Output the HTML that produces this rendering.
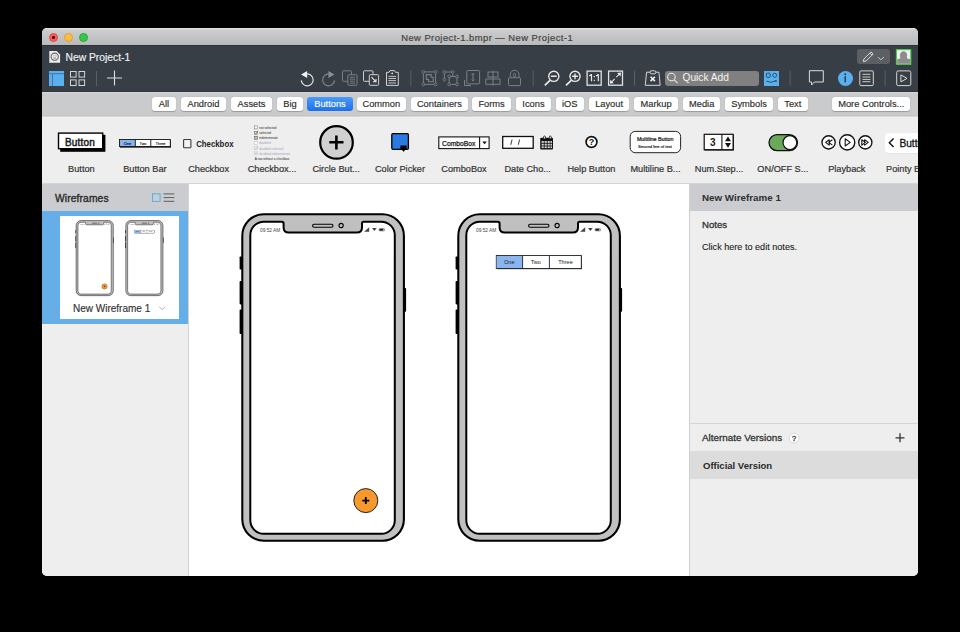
<!DOCTYPE html>
<html><head><meta charset="utf-8">
<style>
*{box-sizing:border-box}
html,body{margin:0;padding:0}
body{width:960px;height:632px;overflow:hidden;background:#000;position:relative;font-family:"Liberation Sans",sans-serif;color:#333}
#win{position:absolute;left:0;top:0;width:960px;height:632px;clip-path:inset(28px 42px 56px 42px round 5px);background:#eeeeee}
.a{position:absolute}
.t{position:absolute;white-space:nowrap;line-height:1}
#title{left:42px;top:28px;width:876px;height:17px;background:linear-gradient(#dedfe0 0,#dedfe0 1px,#cbcccd 2px,#b9babb 100%)}
#tb{left:42px;top:45px;width:876px;height:47px;background:#383e45;border-top:1px solid #2d3136;border-bottom:1px solid #30353a}
#fbar{left:42px;top:92px;width:876px;height:24px;background:#cacbcd;border-top:1px solid #d6d7d9;border-bottom:1px solid #c2c3c5}
#lib{left:42px;top:116px;width:876px;height:68px;background:#eeeeee;border-top:1px solid #d9d9d9;border-bottom:1px solid #d6d6d6}
.fb{position:absolute;top:97px;height:14px;background:#fff;border-radius:3px;box-shadow:0 0.5px 1px rgba(0,0,0,0.25);font-size:9.3px;line-height:14px;text-align:center;color:#2b2b2b;-webkit-text-stroke:0.15px #2b2b2b}
.fb.sel{background:linear-gradient(#4b9bf7,#1f6fee);color:#fff;box-shadow:none;-webkit-text-stroke:0.15px #fff}
.lbl{position:absolute;top:163.1px;width:64px;text-align:center;font-size:9.2px;line-height:12px;color:#333;white-space:nowrap;-webkit-text-stroke:0.2px #333}
.sep{position:absolute;width:1px;top:71px;height:15px;background:#5c6168}
</style></head><body>
<div id="win">
  <div id="title" class="a"></div>
  <div class="t" style="left:401.2px;top:32.7px;font-size:9.4px;letter-spacing:0.46px;color:#444;-webkit-text-stroke:0.2px #444">New Project-1.bmpr — New Project-1</div>
  <!-- traffic lights -->
  <div class="a" style="left:48.5px;top:32.5px;width:9.5px;height:9.5px;border-radius:50%;background:#fc605b;border:0.5px solid #de4a44"></div>
  <div class="a" style="left:52px;top:36px;width:2.6px;height:2.6px;border-radius:50%;background:#4d0000"></div>
  <div class="a" style="left:63.7px;top:32.5px;width:9.5px;height:9.5px;border-radius:50%;background:#fdbc40;border:0.5px solid #dea034"></div>
  <div class="a" style="left:78.7px;top:32.5px;width:9.5px;height:9.5px;border-radius:50%;background:#34c84a;border:0.5px solid #27aa35"></div>

  <div id="tb" class="a"></div>
  <div id="fbar" class="a"></div>
  <div id="lib" class="a"></div>

  <!-- left panel -->
  <div class="a" style="left:42px;top:184px;width:147px;height:392px;background:#eeeeee;border-right:1px solid #d4d4d4"></div>
  <div class="a" style="left:42px;top:184px;width:146px;height:27px;background:#cbcccf"></div>
  <div class="a" style="left:42px;top:211px;width:146px;height:113px;background:#66aee8"></div>
  <div class="a" style="left:59.8px;top:215.8px;width:119.5px;height:103.3px;background:#fff"></div>

<div class="fb" style="left:152.0px;width:24.0px">All</div>
<div class="fb" style="left:181.0px;width:45.0px">Android</div>
<div class="fb" style="left:231.0px;width:41.0px">Assets</div>
<div class="fb" style="left:277.0px;width:26.0px">Big</div>
<div class="fb sel" style="left:307.3px;width:45.4px">Buttons</div>
<div class="fb" style="left:356.8px;width:49.1px">Common</div>
<div class="fb" style="left:411.1px;width:56.6px">Containers</div>
<div class="fb" style="left:472.3px;width:38.5px">Forms</div>
<div class="fb" style="left:515.7px;width:35.5px">Icons</div>
<div class="fb" style="left:555.8px;width:28.0px">iOS</div>
<div class="fb" style="left:589.0px;width:40.2px">Layout</div>
<div class="fb" style="left:634.2px;width:43.8px">Markup</div>
<div class="fb" style="left:683.0px;width:37.4px">Media</div>
<div class="fb" style="left:725.2px;width:47.7px">Symbols</div>
<div class="fb" style="left:777.9px;width:29.8px">Text</div>
<div class="fb" style="left:832.2px;width:78.2px">More Controls...</div>
<div class="lbl" style="left:49.4px">Button</div>
<div class="lbl" style="left:112.9px">Button Bar</div>
<div class="lbl" style="left:176.6px">Checkbox</div>
<div class="lbl" style="left:240.0px">Checkbox...</div>
<div class="lbl" style="left:304.2px">Circle But...</div>
<div class="lbl" style="left:368.0px">Color Picker</div>
<div class="lbl" style="left:432.0px">ComboBox</div>
<div class="lbl" style="left:495.7px">Date Cho...</div>
<div class="lbl" style="left:559.4px">Help Button</div>
<div class="lbl" style="left:623.5px">Multiline B...</div>
<div class="lbl" style="left:687.1px">Num.Step...</div>
<div class="lbl" style="left:750.9px">ON/OFF S...</div>
<div class="lbl" style="left:814.8px">Playback</div>
<div class="lbl" style="left:886px;text-align:left;width:80px">Pointy B...</div>

  <!-- toolbar text -->
  <div class="t" style="left:65.5px;top:53.2px;font-size:10.3px;color:#f2f2f2;-webkit-text-stroke:0.15px #f2f2f2">New Project-1</div>
  <div class="a" style="left:665px;top:70.7px;width:94.2px;height:15px;background:#808080;border-radius:3px"></div>
  <div class="t" style="left:682.5px;top:73px;font-size:10.2px;color:#f4f4f4">Quick Add</div>
  <div class="a" style="left:856.8px;top:49.2px;width:33px;height:15.2px;background:#5c6065;border-radius:3px"></div>
  <div class="a" style="left:763.7px;top:70.7px;width:15.5px;height:15px;background:#5aafef"></div>
  <div class="a" style="left:845.1px;top:78.2px;width:15px;height:15px;margin:-7.5px 0 0 -7.5px;border-radius:50%;background:#5aafef"></div>
  <!-- left panel text -->
  <div class="t" style="left:55px;top:194px;font-size:10.3px;letter-spacing:0.1px;color:#2a2a2a;-webkit-text-stroke:0.35px #2a2a2a">Wireframes</div>
  <div class="t" style="left:73px;top:303.6px;font-size:10px;color:#333;-webkit-text-stroke:0.15px #333">New Wireframe 1</div>

  <!-- canvas -->
  <div class="a" style="left:189px;top:184px;width:500px;height:392px;background:#fff"></div>

  <!-- right panel -->
  <div class="a" style="left:689px;top:184px;width:229px;height:392px;background:#eeeeee;border-left:1px solid #cfcfcf"></div>
  <div class="a" style="left:690px;top:184px;width:228px;height:26.5px;background:#cbcccf"></div>
  <div class="a" style="left:690px;top:423px;width:228px;height:1px;background:#d6d6d6"></div>
  <div class="a" style="left:690px;top:450.5px;width:228px;height:28px;background:#dcdcdc"></div>

  <!-- right panel text -->
  <div class="t" style="left:702px;top:192.5px;font-size:9.8px;font-weight:bold;color:#2e2e2e">New Wireframe 1</div>
  <div class="t" style="left:702px;top:219.8px;font-size:9.6px;color:#333;-webkit-text-stroke:0.3px #333">Notes</div>
  <div class="t" style="left:702px;top:242.5px;font-size:9.1px;color:#222;-webkit-text-stroke:0.1px #222">Click here to edit notes.</div>
  <div class="t" style="left:702px;top:433px;font-size:9.9px;color:#333;-webkit-text-stroke:0.3px #333">Alternate Versions</div>
  <div class="t" style="left:703px;top:460.5px;font-size:9.5px;font-weight:bold;color:#2a2a2a">Official Version</div>

<svg class="a" style="left:0;top:0" width="960" height="632" viewBox="0 0 960 632">
<g fill="none" stroke-linecap="butt">
  <!-- project icon -->
  <path d="M49.3 51 H56.6 L60.1 54.4 V62.8 H49.3 Z" fill="#ececec"/>
  <circle cx="54.7" cy="56.7" r="3.6" stroke="#6a6a6a" stroke-width="1.1"/>
  <path d="M53.3 58 H56.1" stroke="#777" stroke-width="0.9"/>
  <circle cx="53.6" cy="55.7" r="0.5" fill="#888"/><circle cx="55.8" cy="55.7" r="0.5" fill="#888"/>
  <!-- layout icon -->
  <rect x="49" y="71" width="15" height="15" fill="#5aafef"/>
  <rect x="49" y="73.3" width="15" height="0.9" fill="#3b6f9a"/>
  <rect x="52" y="74.2" width="0.9" height="11.8" fill="#3b6f9a"/>
  <!-- grid icon -->
  <g stroke="#d6d6d6" stroke-width="1">
    <rect x="70.5" y="71.5" width="5.6" height="5.6"/>
    <rect x="79" y="71.5" width="5.6" height="5.6"/>
    <rect x="70.5" y="79.9" width="5.6" height="5.6"/>
    <rect x="79" y="79.9" width="5.6" height="5.6"/>
  </g>
  <!-- plus -->
  <path d="M107 78 H122 M114.5 70.5 V85.5" stroke="#dedede" stroke-width="1.1"/>
  <!-- undo -->
  <path d="M307.2 73.9 A5.95 5.95 0 1 1 301.3 80.4" stroke="#e2e2e2" stroke-width="1.2"/>
  <path d="M301.1 74.5 L307.2 70.9 L307.2 78 Z" fill="#f2f2f2"/>
  <!-- redo -->
  <path d="M328.6 73.9 A5.95 5.95 0 1 0 334.5 80.4" stroke="#80858b" stroke-width="1.2"/>
  <path d="M334.5 74.5 L328.4 70.9 L328.4 78 Z" fill="#8a8f94"/>
  <!-- copy (disabled) -->
  <g stroke="#7a7f85" stroke-width="1">
    <rect x="342.5" y="70.8" width="9" height="10.5" rx="0.8"/>
    <rect x="347.8" y="74.7" width="9.2" height="10.6" rx="0.8" fill="#393e45"/>
    <path d="M349.8 77.2 H355 M349.8 79.2 H355 M349.8 81.2 H355 M349.8 83.2 H355" stroke-width="0.9"/>
  </g>
  <!-- duplicate -->
  <g stroke="#cfcfcf" stroke-width="1">
    <rect x="363.5" y="70.8" width="9.5" height="10.5" rx="0.8"/>
    <rect x="369.3" y="74.7" width="9.3" height="10.6" rx="0.8" fill="#393e45"/>
    <path d="M371.5 77.2 L376 81.8 M376 79 V81.8 H373" stroke="#e8e8e8" stroke-width="1.1"/>
  </g>
  <!-- paste -->
  <g stroke="#d2d2d2" stroke-width="1">
    <path d="M389 72.3 H386.5 V85.4 H398.3 V72.3 H395.5 L394.5 70.6 H390 Z"/>
    <path d="M388.4 76.4 H396 M388.4 78.5 H396 M388.4 80.6 H396 M388.4 83 H396" stroke-width="0.9"/>
  </g>
  <circle cx="392.2" cy="73.3" r="0.9" fill="#e0e0e0"/>
  <!-- separators -->
  <g fill="#5a5f66">
    <rect x="96" y="71" width="1" height="15"/>
    <rect x="410.3" y="70.7" width="1" height="15"/>
    <rect x="532.7" y="70.7" width="1" height="15"/>
    <rect x="634" y="70.7" width="1" height="15"/>
    <rect x="789.6" y="70.7" width="1" height="15"/>
    <rect x="884.6" y="70.7" width="1" height="15"/>
  </g>
  <!-- group -->
  <g stroke="#7b8086" stroke-width="1">
    <rect x="423.4" y="71.9" width="12.2" height="12.5"/>
    <path d="M426.3 74.6 H431.2 V77.2 H433.2 V81.8 H428.5 V79.4 H426.3 Z" stroke-width="1.1"/>
  </g>
  <g fill="#393e45" stroke="#7b8086" stroke-width="0.9">
    <circle cx="423.4" cy="71.9" r="1.4"/><circle cx="435.6" cy="71.9" r="1.4"/>
    <circle cx="423.4" cy="84.4" r="1.4"/><circle cx="435.6" cy="84.4" r="1.4"/>
  </g>
  <!-- ungroup -->
  <g stroke="#7b8086" stroke-width="1">
    <path d="M444.4 79.6 V72 H452.7 V76.5"/>
    <rect x="449.2" y="76.5" width="7.8" height="7.9"/>
  </g>
  <g fill="#393e45" stroke="#7b8086" stroke-width="0.9">
    <circle cx="444.4" cy="72" r="1.4"/><circle cx="452.7" cy="72" r="1.4"/><circle cx="444.4" cy="79.6" r="1.4"/>
    <circle cx="449.2" cy="76.5" r="1.4"/><circle cx="457" cy="76.5" r="1.4"/>
    <circle cx="449.2" cy="84.4" r="1.4"/><circle cx="457" cy="84.4" r="1.4"/>
  </g>
  <!-- arrange -->
  <g stroke="#7b8086" stroke-width="1">
    <rect x="466.8" y="70.5" width="12.8" height="13.4" rx="1"/>
    <path d="M464.5 80 V85.5 H471"/>
    <path d="M473 73.6 V80.8 M471.6 74.9 L473 73.4 L474.4 74.9 M471.6 79.5 L473 81 L474.4 79.5"/>
  </g>
  <!-- align -->
  <g stroke="#7b8086" stroke-width="1">
    <path d="M493 70.7 V85.7"/>
    <rect x="488" y="72" width="10" height="5"/>
    <rect x="485.8" y="79" width="14.2" height="5.3"/>
  </g>
  <!-- lock -->
  <g stroke="#7b8086" stroke-width="1">
    <rect x="508.5" y="77.7" width="12" height="7.9" rx="1"/>
    <path d="M510.3 77.7 V74.6 A4.35 4.35 0 0 1 519 74.6 V77.7"/>
    <rect x="513.6" y="73.3" width="1.9" height="3.6" rx="0.95" stroke-width="0.9"/>
  </g>
  <!-- zoom out -->
  <g stroke="#e8e8e8">
    <circle cx="553.8" cy="76.3" r="5.1" stroke-width="1.4"/>
    <path d="M550.9 76.3 H556.7" stroke-width="1.4"/>
    <path d="M550 80.3 L544.8 85.3" stroke-width="1.8"/>
    <circle cx="575" cy="76.3" r="5.1" stroke-width="1.4"/>
    <path d="M572.1 76.3 H577.9 M575 73.4 V79.2" stroke-width="1.4"/>
    <path d="M571.2 80.3 L566 85.3" stroke-width="1.8"/>
  </g>
  <!-- 1:1 -->
  <rect x="587.1" y="71.1" width="14.1" height="14.1" stroke="#e2e2e2" stroke-width="1.3"/>
  <path d="M589.3 76.1 L591.5 74.6 V81.2 M596.1 76.1 L598.3 74.6 V81.2" stroke="#ececec" stroke-width="1.15" stroke-linejoin="round"/><rect x="593.7" y="76" width="1.2" height="1.2" fill="#ececec"/><rect x="593.7" y="79.8" width="1.2" height="1.2" fill="#ececec"/>
  <!-- fit -->
  <rect x="608.6" y="71.1" width="13.9" height="14.1" stroke="#e2e2e2" stroke-width="1.3"/>
  <path d="M616.3 77.1 L619.6 73.8 M614.7 78.9 L611.3 82.3" stroke="#e8e8e8" stroke-width="1.1"/>
  <path d="M621 72.6 L620.6 76.4 L617.2 73 Z M609.9 83.6 L610.3 79.8 L613.7 83.2 Z" fill="#ececec"/>
  <!-- clear -->
  <g stroke="#d6d6d6" stroke-width="1">
    <path d="M650 72.2 H646.6 L645.2 85.3 H660.2 L658.9 72.2 H655.8"/>
    <rect x="650" y="70.8" width="5.8" height="3" rx="1.2"/>
  </g>
  <path d="M650.6 76.8 L654.9 81.1 M654.9 76.8 L650.6 81.1" stroke="#f4f4f4" stroke-width="1.6"/>
  <!-- search in quick add -->
  <circle cx="671.4" cy="77" r="3.8" stroke="#e8e8e8" stroke-width="1.1"/>
  <path d="M674.2 79.8 L677.6 83.2" stroke="#e8e8e8" stroke-width="1.1"/>
  <!-- blue icon features -->
  <g stroke="#2f4f6a" stroke-width="1">
    <rect x="766.4" y="73.2" width="3.8" height="4.2" rx="0.8"/>
    <circle cx="774.7" cy="75.3" r="2"/>
    <path d="M766.4 81.2 Q771 83.6 776 80.8"/>
  </g>
  <path d="M774.3 80.3 L776.8 80 L776.4 82.5 Z" fill="#2f4f6a"/>
  <!-- comment -->
  <path d="M809.4 70.7 H823.3 V82 H814.4 L811.6 85 V82 H809.4 Z" stroke="#dcdcdc" stroke-width="1"/>
  <!-- info i -->
  <circle cx="845.2" cy="74.3" r="0.95" fill="#30353b"/>
  <rect x="844.5" y="76.2" width="1.4" height="6.2" fill="#30353b"/>
  <!-- list -->
  <rect x="859.8" y="70.9" width="13.5" height="14.7" rx="1" stroke="#d6d6d6" stroke-width="1"/>
  <path d="M862.4 74.3 H870.4 M862.4 79.4 H870.4 M862.4 81.7 H870.4" stroke="#dcdcdc" stroke-width="0.9"/>
  <path d="M862.4 77 H870.4" stroke="#9a9a9a" stroke-width="1.4"/>
  <!-- play -->
  <rect x="896.7" y="70.9" width="14.1" height="14.7" rx="1.5" stroke="#d6d6d6" stroke-width="1"/>
  <path d="M900.9 74.9 L907 78.4 L900.9 81.9 Z" stroke="#dcdcdc" stroke-width="1"/>
  <!-- pencil -->
  <path d="M863.3 61.6 L863.9 59 L871 51.9 L873.1 54 L866 61.1 Z M869.8 53.1 L871.9 55.2" stroke="#e4e4e4" stroke-width="0.9"/>
  <path d="M877.9 57.1 L880.9 59.8 L884 57.1" stroke="#cfd2d5" stroke-width="0.9"/>
  <!-- avatar -->
  <rect x="896.4" y="49.6" width="14.4" height="14.7" fill="#f3f0f3" stroke="#3fd13f" stroke-width="1.1"/>
  <path d="M900.4 58.2 C899.6 55.5 899.6 51.6 903.6 51.2 C907.6 51.6 907.6 55.5 906.8 58.2 L910 59.3 V63.7 H897.2 V59.3 Z" fill="#8d8d8d"/>
</g>
</svg>

<svg class="a" style="left:0;top:0" width="960" height="632" viewBox="0 0 960 632" font-family="Liberation Sans">
  <!-- Button -->
  <rect x="60.2" y="134.8" width="45.2" height="17" fill="#000"/>
  <rect x="58.5" y="133.1" width="44.2" height="15.6" fill="#fff" stroke="#000" stroke-width="1.4"/>
  <text x="80" y="145.6" font-size="10" fill="#1a1a1a" stroke="#1a1a1a" stroke-width="0.45" text-anchor="middle" letter-spacing="0.2">Button</text>
  <!-- Button Bar -->
  <rect x="120" y="140" width="51" height="7.6" fill="#000"/>
  <rect x="119.5" y="139.5" width="50.8" height="7" fill="#fff" stroke="#111" stroke-width="0.9"/>
  <rect x="120" y="140" width="15.3" height="6" fill="#85b3ee"/>
  <path d="M135.3 139.5 V146.5 M150.8 139.5 V146.5" stroke="#111" stroke-width="0.9"/>
  <g font-size="3.8" fill="#111" stroke="#111" stroke-width="0.12" text-anchor="middle">
    <text x="127.6" y="144.5">One</text><text x="143" y="144.5">Two</text><text x="160.5" y="144.5">Three</text>
  </g>
  <!-- Checkbox -->
  <rect x="183.6" y="139.5" width="7.3" height="8.2" rx="0.8" fill="#f2f2f2" stroke="#3a3a3a" stroke-width="1.1"/>
  <text x="196.2" y="146.6" font-size="8.4" font-weight="bold" fill="#222" textLength="37.3" lengthAdjust="spacingAndGlyphs">Checkbox</text>
  <!-- Checkbox group -->
  <g font-size="3.8" lengthAdjust="spacingAndGlyphs">
    <rect x="254.6" y="125.9" width="3" height="3" fill="#fff" stroke="#666" stroke-width="0.5"/>
    <text x="259.2" y="128.9" fill="#222" textLength="17" lengthAdjust="spacingAndGlyphs">not selected</text>
    <rect x="254.6" y="131.3" width="3" height="3" fill="#fff" stroke="#555" stroke-width="0.5"/><path d="M255.1 132.6 L256 133.8 L257.6 130.9" fill="none" stroke="#333" stroke-width="0.6"/>
    <text x="259.2" y="134.3" fill="#222" textLength="11.7" lengthAdjust="spacingAndGlyphs">selected</text>
    <rect x="254.6" y="136.3" width="3" height="3" fill="#bbb" stroke="#555" stroke-width="0.5"/>
    <text x="259.2" y="139.3" fill="#222" textLength="18.6" lengthAdjust="spacingAndGlyphs">indeterminate</text>
    <rect x="254.6" y="141.4" width="3" height="3" fill="#fff" stroke="#bbb" stroke-width="0.5"/>
    <text x="259.2" y="144.4" fill="#a4a6b8" textLength="11.4" lengthAdjust="spacingAndGlyphs">disabled</text>
    <rect x="254.6" y="146.5" width="3" height="3" fill="#fff" stroke="#bbb" stroke-width="0.5"/><path d="M255.1 147.8 L256 149 L257.6 146.1" fill="none" stroke="#aaa" stroke-width="0.6"/>
    <text x="259.2" y="149.5" fill="#a4a6b8" textLength="24" lengthAdjust="spacingAndGlyphs">disabled selected</text>
    <rect x="254.6" y="151.8" width="3" height="3" fill="#d8d8dd" stroke="#ccc" stroke-width="0.5"/>
    <text x="259.2" y="154.8" fill="#a4a6b8" textLength="31" lengthAdjust="spacingAndGlyphs">disabled indeterminate</text>
    <text x="254.7" y="159.9" fill="#222" textLength="34.5" lengthAdjust="spacingAndGlyphs">A row without a checkbox</text>
  </g>
  <!-- Circle button -->
  <circle cx="336.5" cy="142.4" r="16.3" fill="#d0d0d0" stroke="#000" stroke-width="2.2"/>
  <path d="M329.3 142.3 H343.5 M336.4 135.5 V149.4" stroke="#000" stroke-width="2.6"/>
  <!-- Color picker -->
  <rect x="391.8" y="133.6" width="16.6" height="15.7" rx="1.2" fill="#2b7ae0" stroke="#000" stroke-width="1.3"/>
  <path d="M400.4 145.4 H406.6 V148.2 L403.6 151.8 L400.4 148.2 Z" fill="#000"/>
  <!-- ComboBox -->
  <rect x="438.8" y="136.9" width="50.3" height="11.7" fill="#fff" stroke="#111" stroke-width="1.1"/>
  <path d="M479.6 136.9 V148.6" stroke="#111" stroke-width="1.1"/>
  <path d="M482.3 141.6 H486.8 L484.55 144.2 Z" fill="#111"/>
  <text x="442" y="145.6" font-size="7.4" fill="#111" stroke="#111" stroke-width="0.25" textLength="33.5" lengthAdjust="spacingAndGlyphs">ComboBox</text>
  <!-- Date -->
  <rect x="502.7" y="136.5" width="30.5" height="11.8" fill="#fff" stroke="#111" stroke-width="1.3"/>
  <path d="M512.1 139.5 L510.8 144.8 M519.6 139.5 L518.3 144.8" stroke="#222" stroke-width="0.9"/>
  <rect x="540.2" y="137.8" width="12.8" height="11.6" rx="1" fill="#111"/>
  <g fill="#cfcfcf">
    <rect x="541.6" y="141" width="2.2" height="1.9"/><rect x="544.6" y="141" width="2.2" height="1.9"/><rect x="547.6" y="141" width="2.2" height="1.9"/><rect x="550.4" y="141" width="1.6" height="1.9"/>
    <rect x="541.6" y="143.7" width="2.2" height="1.9"/><rect x="544.6" y="143.7" width="2.2" height="1.9"/><rect x="547.6" y="143.7" width="2.2" height="1.9"/><rect x="550.4" y="143.7" width="1.6" height="1.9"/>
    <rect x="541.6" y="146.4" width="2.2" height="1.7"/><rect x="544.6" y="146.4" width="2.2" height="1.7"/><rect x="547.6" y="146.4" width="2.2" height="1.7"/><rect x="550.4" y="146.4" width="1.6" height="1.7"/>
  </g>
  <g fill="#fff" stroke="#111" stroke-width="0.8"><rect x="543.6" y="136" width="1.8" height="3" rx="0.9"/><rect x="549.4" y="136" width="1.8" height="3" rx="0.9"/></g>
  <!-- Help -->
  <circle cx="591.5" cy="142" r="5.4" fill="#fff" stroke="#111" stroke-width="1.7"/>
  <text x="591.6" y="145.4" font-size="9" font-weight="bold" fill="#111" text-anchor="middle">?</text>
  <!-- Multiline -->
  <rect x="630.2" y="131.4" width="50.4" height="21.3" rx="5" fill="#fff" stroke="#222" stroke-width="1"/>
  <text x="636.9" y="140.7" font-size="5.4" fill="#111" stroke="#111" stroke-width="0.2" textLength="36.6" lengthAdjust="spacingAndGlyphs">Multiline Button</text>
  <text x="638" y="147.9" font-size="4.2" fill="#111" stroke="#111" stroke-width="0.15" textLength="34" lengthAdjust="spacingAndGlyphs">Second line of text</text>
  <!-- Stepper -->
  <rect x="704.5" y="134.6" width="29.4" height="15.9" fill="#000"/>
  <rect x="704.2" y="134.3" width="28.9" height="15.4" fill="#fff" stroke="#111" stroke-width="1.2"/>
  <path d="M721.9 134.3 V149.7" stroke="#111" stroke-width="1.1"/>
  <text x="712.9" y="146.3" font-size="10" font-weight="bold" fill="#1a1a1a" text-anchor="middle">3</text>
  <path d="M725 141.3 L728 136.6 L731 141.3 Z M725 143 L728 147.7 L731 143 Z" fill="#111"/>
  <!-- Toggle -->
  <rect x="769" y="134.6" width="28.5" height="16" rx="8" fill="#6aa95a" stroke="#111" stroke-width="1.3"/>
  <circle cx="789.9" cy="142.6" r="6.9" fill="#fff" stroke="#111" stroke-width="1.2"/>
  <!-- Playback -->
  <g fill="#fff" stroke="#111" stroke-width="1.35">
    <circle cx="828.6" cy="142.4" r="6.6"/>
    <circle cx="847.2" cy="142.4" r="7.6"/>
    <circle cx="865.3" cy="142.4" r="6.6"/>
  </g>
  <g fill="none" stroke="#111" stroke-width="1.1" stroke-linejoin="round">
    <path d="M829.2 139.7 L825.6 142.4 L829.2 145.1 Z M832.4 139.7 L828.8 142.4 L832.4 145.1"/>
    <path d="M845.2 138.8 L850.2 142.4 L845.2 146 Z"/>
    <path d="M861.8 139.7 L865.4 142.4 L861.8 145.1 Z M864.6 139.7 L868.2 142.4 L864.6 145.1 Z"/>
  </g>
  <!-- Pointy -->
  <rect x="885.3" y="133.6" width="45" height="20" rx="4" fill="#000" opacity="0.08"/><rect x="885" y="133" width="45" height="20" rx="4" fill="#fff"/>
  <path d="M893.6 138.6 L889.3 142.8 L893.6 147" fill="none" stroke="#111" stroke-width="1.4"/>
  <text x="899.4" y="146.8" font-size="10.2" fill="#111" stroke="#111" stroke-width="0.3">Button</text>
</svg>

<svg class="a" style="left:0;top:0" width="960" height="632" viewBox="0 0 960 632" font-family="Liberation Sans">
  <g>
  <rect x="239.6" y="256.5" width="3" height="13.1" rx="0.8" fill="#000"/>
  <rect x="239.6" y="281" width="3" height="23.4" rx="0.8" fill="#000"/>
  <rect x="239.6" y="309.6" width="3" height="24.4" rx="0.8" fill="#000"/>
  <rect x="403.5" y="288" width="2.6" height="23.8" rx="0.8" fill="#000"/>
  <rect x="242.3" y="214.3" width="161.6" height="326.4" rx="21.5" fill="#c0c0c0" stroke="#000" stroke-width="2.1"/>
  <path d="M263.8 221.7 H281.8 Q283.6 221.7 283.6 223.5 V227.6 Q283.6 232.6 288.6 232.6 H357 Q362 232.6 362 227.6 V223.5 Q362 221.7 363.8 221.7 H381.3 A13.5 13.5 0 0 1 394.8 235.2 V520.3 A13.5 13.5 0 0 1 381.3 533.8 H263.8 A13.5 13.5 0 0 1 250.3 520.3 V235.2 A13.5 13.5 0 0 1 263.8 221.7 Z" fill="#fff" stroke="#000" stroke-width="2"/>
  <rect x="312.6" y="224.3" width="20.4" height="3" rx="1.5" fill="#c0c0c0" stroke="#000" stroke-width="1.1"/>
  <circle cx="341.1" cy="225.5" r="2.1" fill="#c8c8c8" stroke="#000" stroke-width="1.1"/>
  <text x="260" y="232" font-size="4.8" fill="#444" letter-spacing="0">09:52 AM</text>
  <path d="M364.1 231.7 L369.2 231.7 L369.2 227.3 Z" fill="#444"/>
  <path d="M372 228.1 L376.7 228.1 L374.4 231 Z" fill="#444"/>
  <rect x="379.2" y="228.6" width="5.3" height="2.3" rx="0.5" fill="#fff" stroke="#444" stroke-width="0.5"/>
  <rect x="379.4" y="228.8" width="3.9" height="1.9" fill="#222"/>
  <circle cx="365.8" cy="500.6" r="12" fill="#f7992c" stroke="#222" stroke-width="1"/>
  <path d="M362.3 500.6 H369.3 M365.8 497.1 V504.1" stroke="#000" stroke-width="1.8"/>
  </g>
  <g>
  <rect x="455.6" y="256.5" width="3" height="13.1" rx="0.8" fill="#000"/>
  <rect x="455.6" y="281" width="3" height="23.4" rx="0.8" fill="#000"/>
  <rect x="455.6" y="309.6" width="3" height="24.4" rx="0.8" fill="#000"/>
  <rect x="619.5" y="288" width="2.6" height="23.8" rx="0.8" fill="#000"/>
  <rect x="458.3" y="214.3" width="161.6" height="326.4" rx="21.5" fill="#c0c0c0" stroke="#000" stroke-width="2.1"/>
  <path d="M479.8 221.7 H497.8 Q499.6 221.7 499.6 223.5 V227.6 Q499.6 232.6 504.6 232.6 H573 Q578 232.6 578 227.6 V223.5 Q578 221.7 579.8 221.7 H597.3 A13.5 13.5 0 0 1 610.8 235.2 V520.3 A13.5 13.5 0 0 1 597.3 533.8 H479.8 A13.5 13.5 0 0 1 466.3 520.3 V235.2 A13.5 13.5 0 0 1 479.8 221.7 Z" fill="#fff" stroke="#000" stroke-width="2"/>
  <rect x="528.6" y="224.3" width="20.4" height="3" rx="1.5" fill="#c0c0c0" stroke="#000" stroke-width="1.1"/>
  <circle cx="557.1" cy="225.5" r="2.1" fill="#c8c8c8" stroke="#000" stroke-width="1.1"/>
  <text x="476" y="232" font-size="4.8" fill="#444" letter-spacing="0">09:52 AM</text>
  <path d="M580.1 231.7 L585.2 231.7 L585.2 227.3 Z" fill="#444"/>
  <path d="M588 228.1 L592.7 228.1 L590.4 231 Z" fill="#444"/>
  <rect x="595.2" y="228.6" width="5.3" height="2.3" rx="0.5" fill="#fff" stroke="#444" stroke-width="0.5"/>
  <rect x="595.4" y="228.8" width="3.9" height="1.9" fill="#222"/>
  <rect x="497" y="256.2" width="85" height="13" fill="#444"/>
  <rect x="496.3" y="255.5" width="85" height="13" fill="#fff" stroke="#222" stroke-width="0.9"/>
  <rect x="496.8" y="256" width="25.8" height="12" fill="#8ab5ee"/>
  <path d="M522.6 255.5 V268.5 M549.4 255.5 V268.5" stroke="#222" stroke-width="0.9"/>
  <g font-size="5.6" fill="#222" text-anchor="middle"><text x="509.3" y="264.2">One</text><text x="535.8" y="264.2">Two</text><text x="565.5" y="264.2">Three</text></g>
  </g>
</svg>

<svg class="a" style="left:0;top:0" width="960" height="632" viewBox="0 0 960 632" font-family="Liberation Sans">
  <rect x="152.5" y="193.8" width="7.6" height="7.6" fill="none" stroke="#5aaeea" stroke-width="1"/>
  <path d="M163.6 193.9 H174.3 M163.6 197.6 H174.3 M163.6 201.3 H174.3" stroke="#505050" stroke-width="0.9"/>
  <path d="M159.2 306.9 L162.1 309.6 L165 306.9" fill="none" stroke="#9aa0a8" stroke-width="0.8"/>
  <g transform="translate(20.4,171.3) scale(0.23)">
  <g>
  <rect x="239.6" y="256.5" width="3" height="13.1" rx="0.8" fill="#000"/>
  <rect x="239.6" y="281" width="3" height="23.4" rx="0.8" fill="#000"/>
  <rect x="239.6" y="309.6" width="3" height="24.4" rx="0.8" fill="#000"/>
  <rect x="403.5" y="288" width="2.6" height="23.8" rx="0.8" fill="#000"/>
  <rect x="242.3" y="214.3" width="161.6" height="326.4" rx="21.5" fill="#c0c0c0" stroke="#000" stroke-width="2.1"/>
  <path d="M263.8 221.7 H281.8 Q283.6 221.7 283.6 223.5 V227.6 Q283.6 232.6 288.6 232.6 H357 Q362 232.6 362 227.6 V223.5 Q362 221.7 363.8 221.7 H381.3 A13.5 13.5 0 0 1 394.8 235.2 V520.3 A13.5 13.5 0 0 1 381.3 533.8 H263.8 A13.5 13.5 0 0 1 250.3 520.3 V235.2 A13.5 13.5 0 0 1 263.8 221.7 Z" fill="#fff" stroke="#000" stroke-width="2"/>
  <rect x="312.6" y="224.3" width="20.4" height="3" rx="1.5" fill="#c0c0c0" stroke="#000" stroke-width="1.1"/>
  <circle cx="341.1" cy="225.5" r="2.1" fill="#c8c8c8" stroke="#000" stroke-width="1.1"/>
  <text x="260" y="232" font-size="4.8" fill="#444" letter-spacing="0">09:52 AM</text>
  <path d="M364.1 231.7 L369.2 231.7 L369.2 227.3 Z" fill="#444"/>
  <path d="M372 228.1 L376.7 228.1 L374.4 231 Z" fill="#444"/>
  <rect x="379.2" y="228.6" width="5.3" height="2.3" rx="0.5" fill="#fff" stroke="#444" stroke-width="0.5"/>
  <rect x="379.4" y="228.8" width="3.9" height="1.9" fill="#222"/>
  <circle cx="365.8" cy="500.6" r="12" fill="#f7992c" stroke="#222" stroke-width="1"/>
  <path d="M362.3 500.6 H369.3 M365.8 497.1 V504.1" stroke="#000" stroke-width="1.8"/>
  </g>
  <g>
  <rect x="455.6" y="256.5" width="3" height="13.1" rx="0.8" fill="#000"/>
  <rect x="455.6" y="281" width="3" height="23.4" rx="0.8" fill="#000"/>
  <rect x="455.6" y="309.6" width="3" height="24.4" rx="0.8" fill="#000"/>
  <rect x="619.5" y="288" width="2.6" height="23.8" rx="0.8" fill="#000"/>
  <rect x="458.3" y="214.3" width="161.6" height="326.4" rx="21.5" fill="#c0c0c0" stroke="#000" stroke-width="2.1"/>
  <path d="M479.8 221.7 H497.8 Q499.6 221.7 499.6 223.5 V227.6 Q499.6 232.6 504.6 232.6 H573 Q578 232.6 578 227.6 V223.5 Q578 221.7 579.8 221.7 H597.3 A13.5 13.5 0 0 1 610.8 235.2 V520.3 A13.5 13.5 0 0 1 597.3 533.8 H479.8 A13.5 13.5 0 0 1 466.3 520.3 V235.2 A13.5 13.5 0 0 1 479.8 221.7 Z" fill="#fff" stroke="#000" stroke-width="2"/>
  <rect x="528.6" y="224.3" width="20.4" height="3" rx="1.5" fill="#c0c0c0" stroke="#000" stroke-width="1.1"/>
  <circle cx="557.1" cy="225.5" r="2.1" fill="#c8c8c8" stroke="#000" stroke-width="1.1"/>
  <text x="476" y="232" font-size="4.8" fill="#444" letter-spacing="0">09:52 AM</text>
  <path d="M580.1 231.7 L585.2 231.7 L585.2 227.3 Z" fill="#444"/>
  <path d="M588 228.1 L592.7 228.1 L590.4 231 Z" fill="#444"/>
  <rect x="595.2" y="228.6" width="5.3" height="2.3" rx="0.5" fill="#fff" stroke="#444" stroke-width="0.5"/>
  <rect x="595.4" y="228.8" width="3.9" height="1.9" fill="#222"/>
  <rect x="497" y="256.2" width="85" height="13" fill="#444"/>
  <rect x="496.3" y="255.5" width="85" height="13" fill="#fff" stroke="#222" stroke-width="0.9"/>
  <rect x="496.8" y="256" width="25.8" height="12" fill="#8ab5ee"/>
  <path d="M522.6 255.5 V268.5 M549.4 255.5 V268.5" stroke="#222" stroke-width="0.9"/>
  <g font-size="5.6" fill="#222" text-anchor="middle"><text x="509.3" y="264.2">One</text><text x="535.8" y="264.2">Two</text><text x="565.5" y="264.2">Three</text></g>
  </g>
</g>
  <circle cx="794.1" cy="438.2" r="4.9" fill="#fff" stroke="#d0d0d0" stroke-width="0.8"/>
  <text x="794.1" y="441.1" font-size="7.6" fill="#333" stroke="#333" stroke-width="0.3" text-anchor="middle">?</text>
  <path d="M895.5 437.8 H904.5 M900 433.3 V442.3" stroke="#333" stroke-width="1.3"/>
</svg>

<!--OVERLAY-->
</div>
</body></html>
